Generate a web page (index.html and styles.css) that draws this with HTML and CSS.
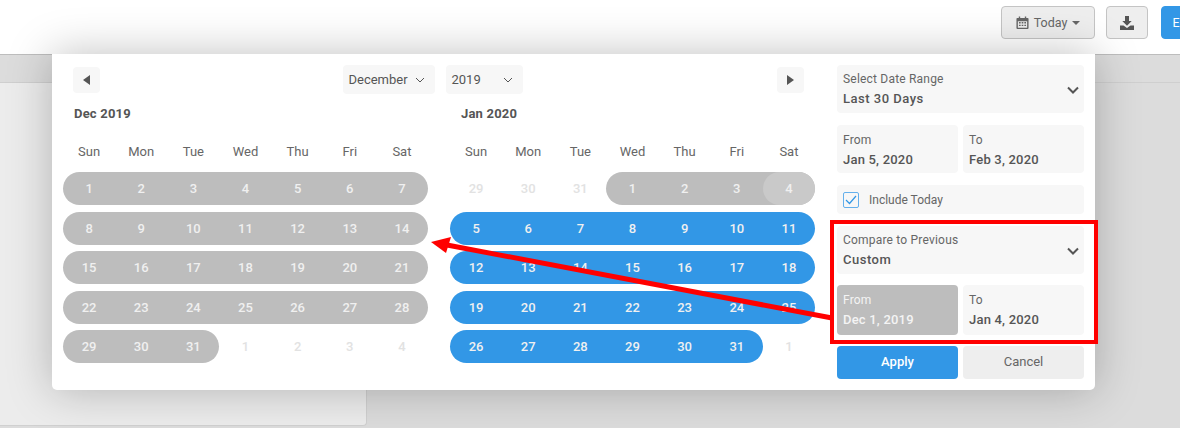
FILE: index.html
```html
<!DOCTYPE html>
<html>
	<head>
		<meta charset="utf-8">
		<title>Date range</title>
		<link rel="stylesheet" href="styles.css">
	</head>
	<body>
		<div class="topbar">
			<button class="tool today">
				<svg width="13" height="14" viewBox="0 0 14 14"><path fill="#666" fill-rule="evenodd" d="M3 0h1.500v1.500h5V0H11v1.500h1.500a1 1 0 0 1 1 1v10a1 1 0 0 1-1 1h-11a1 1 0 0 1-1-1v-10a1 1 0 0 1 1-1H3zM2 5v7h10V5zM3.200 6h1.800v1.500H3.200zm2.900 0h1.800v1.500H6.100zM9 6h1.800v1.500H9zM3.200 8.800h1.800v1.500H3.200zm2.900 0h1.800v1.500H6.100zm2.900 0h1.800v1.500H9z"/></svg>
				Today
				<i class="caret"></i>
			</button>
			<button class="tool save">
				<svg width="14" height="14" viewBox="0 0 14 14"><path fill="#555" d="M5 0h4v5h2.700L7 9.700 2.300 5H5zM0 9.500h3.500L7 12l3.500-2.500H14V14H0z"/></svg>
			</button>
			<button class="tool blue">E</button>
		</div>

		<div class="back">
			<div class="strip"></div>
			<div class="card"></div>
		</div>

		<div class="modal">
			<div class="cals">
				<div class="nav">
					<button class="arrow"><i class="tri left"></i></button>
					<div class="pickers">
						<div class="pick month">December <svg width="10" height="6" viewBox="0 0 10 6"><path d="M1 1l4 4 4-4" fill="none" stroke="#555" stroke-width="1"/></svg></div>
						<div class="pick year">2019 <svg width="10" height="6" viewBox="0 0 10 6"><path d="M1 1l4 4 4-4" fill="none" stroke="#555" stroke-width="1"/></svg></div>
					</div>
					<button class="arrow"><i class="tri right"></i></button>
				</div>
				<div class="months">
					<div class="cal">
						<h4>Dec 2019</h4>
						<div class="week head"><span>Sun</span><span>Mon</span><span>Tue</span><span>Wed</span><span>Thu</span><span>Fri</span><span>Sat</span></div>
						<div class="week"><div class="pill gray"><span>1</span><span>2</span><span>3</span><span>4</span><span>5</span><span>6</span><span>7</span></div></div>
						<div class="week"><div class="pill gray"><span>8</span><span>9</span><span>10</span><span>11</span><span>12</span><span>13</span><span>14</span></div></div>
						<div class="week"><div class="pill gray"><span>15</span><span>16</span><span>17</span><span>18</span><span>19</span><span>20</span><span>21</span></div></div>
						<div class="week"><div class="pill gray"><span>22</span><span>23</span><span>24</span><span>25</span><span>26</span><span>27</span><span>28</span></div></div>
						<div class="week"><div class="pill gray"><span>29</span><span>30</span><span>31</span></div><span class="off">1</span><span class="off">2</span><span class="off">3</span><span class="off">4</span></div>
					</div>
					<div class="cal">
						<h4>Jan 2020</h4>
						<div class="week head"><span>Sun</span><span>Mon</span><span>Tue</span><span>Wed</span><span>Thu</span><span>Fri</span><span>Sat</span></div>
						<div class="week"><span class="off">29</span><span class="off">30</span><span class="off">31</span><div class="pill gray"><span>1</span><span>2</span><span>3</span><span class="now">4</span></div></div>
						<div class="week"><div class="pill blue"><span>5</span><span>6</span><span>7</span><span>8</span><span>9</span><span>10</span><span>11</span></div></div>
						<div class="week"><div class="pill blue"><span>12</span><span>13</span><span>14</span><span>15</span><span>16</span><span>17</span><span>18</span></div></div>
						<div class="week"><div class="pill blue"><span>19</span><span>20</span><span>21</span><span>22</span><span>23</span><span>24</span><span>25</span></div></div>
						<div class="week"><div class="pill blue"><span>26</span><span>27</span><span>28</span><span>29</span><span>30</span><span>31</span></div><span class="off">1</span></div>
					</div>
				</div>
			</div>

			<div class="side">
				<div class="box sel">
					<div><label>Select Date Range</label><b>Last 30 Days</b></div>
					<svg width="12" height="8" viewBox="0 0 12 8"><path d="M1 1.500l5 5 5-5" fill="none" stroke="#555" stroke-width="2"/></svg>
				</div>
				<div class="pair">
					<div class="box"><label>From</label><b>Jan 5, 2020</b></div>
					<div class="box"><label>To</label><b>Feb 3, 2020</b></div>
				</div>
				<div class="box check">
					<i class="tick"><svg width="12" height="10" viewBox="0 0 12 10"><path d="M1 5l3.500 3.500L11 1" fill="none" stroke="#3297e6" stroke-width="1.200"/></svg></i>
					Include Today
				</div>
				<div class="box sel">
					<div><label>Compare to Previous</label><b>Custom</b></div>
					<svg width="12" height="8" viewBox="0 0 12 8"><path d="M1 1.500l5 5 5-5" fill="none" stroke="#555" stroke-width="2"/></svg>
				</div>
				<div class="pair tall">
					<div class="box on"><label>From</label><b>Dec 1, 2019</b></div>
					<div class="box"><label>To</label><b>Jan 4, 2020</b></div>
				</div>
				<div class="pair btns">
					<button class="apply">Apply</button>
					<button class="cancel">Cancel</button>
				</div>
			</div>
		</div>

		<!-- annotation -->
		<div class="mark"></div>
		<svg class="arrow-note" width="1180" height="428" viewBox="0 0 1180 428">
			<path d="M832 318L447 245" stroke="#f00" stroke-width="5" fill="none"/>
			<path d="M431 242L451 237L446 253z" fill="#f00"/>
		</svg>
	</body>
</html>
```

FILE: styles.css
```css
html,body{
	margin: 0;
	height: 100%;
}
body{
	width: 1180px;
	height: 428px;
	position: relative;
	overflow: hidden;
	background: #dcdcdc;
	font-family: Roboto, "Liberation Sans", sans-serif;
	font-size: 12px;
	color: #555;
}
button{
	font-family: inherit;
	cursor: pointer;
}

.topbar{
	height: 54px;
	background: #fff;
	display: flex;
	justify-content: flex-end;
	align-items: flex-start;
	padding-top: 6px;
	box-sizing: border-box;
	position: relative;
	z-index: 2;
}
.tool{
	height: 33px;
	margin-left: 11px;
	border: #c4c4c4 solid 1px;
	border-radius: 4px;
	background: #eee;
	color: #666;
	font-size: 12.500px;
	display: flex;
	align-items: center;
	justify-content: center;
	padding: 0;
}
.today{
	width: 94px;
	gap: 5px;
}
.save{
	width: 42px;
}
.tool.blue{
	width: 30px;
	margin-left: 13px;
	margin-right: -11px;
	background: #3297e6;
	border-color: #3297e6;
	color: #fff;
}
.caret{
	border: transparent solid 4px;
	border-top-color: #666;
	border-bottom: none;
}

.back{
	position: absolute;
	left: 0;
	right: 0;
	top: 54px;
	bottom: 0;
	border-top: #bdbdbd solid 1px;
}
.strip{
	height: 27px;
	background: #dcdcdc;
	border-bottom: #cfcfcf solid 1px;
}
.card{
	width: 366px;
	height: 342px;
	background: #ececec;
	border-right: #d0d0d0 solid 1px;
	border-bottom: #d0d0d0 solid 1px;
	border-radius: 0 0 4px 0;
}

.modal{
	position: absolute;
	left: 52px;
	top: 54px;
	width: 1043px;
	height: 336px;
	background: #fff;
	border-radius: 0 0 5px 5px;
	box-shadow: 0 0 45px rgba(0,0,0,0.25);
	display: flex;
	z-index: 3;
}
.cals{
	width: 763px;
	padding-left: 11px;
	box-sizing: border-box;
}
.nav{
	display: flex;
	justify-content: space-between;
	align-items: center;
	height: 29px;
	margin-top: 11px;
	padding: 0 11px 0 10px;
	width: 752px;
	box-sizing: border-box;
	position: relative;
}
.arrow{
	width: 27px;
	height: 26px;
	border: none;
	border-radius: 4px;
	background: #f7f7f7;
	display: flex;
	align-items: center;
	justify-content: center;
	padding: 0;
}
.tri{
	border: transparent solid 5px;
	border-left: none;
	border-right: #555 solid 7px;
}
.tri.right{
	border-right: none;
	border-left: #555 solid 7px;
}
.pickers{
	display: flex;
	gap: 11px;
	margin-left: -12px;
}
.pick{
	height: 29px;
	background: #f7f7f7;
	border-radius: 4px;
	display: flex;
	align-items: center;
	justify-content: space-between;
	box-sizing: border-box;
	padding: 0 10px 0 6px;
	font-size: 13px;
}
.month{
	width: 92px;
}
.year{
	width: 77px;
}

.months{
	display: flex;
	gap: 22px;
}
.cal{
	width: 365px;
}
.cal h4{
	margin: 11px 0 0 11px;
	height: 18px;
	line-height: 18px;
	font-size: 13px;
	letter-spacing: 0.2px;
	font-weight: bold;
	color: #555;
}
.week{
	display: flex;
	height: 33px;
	margin-bottom: 6.500px;
	font-weight: 500;
	font-size: 13px;
}
.week span{
	width: calc(365px / 7);
	flex: none;
	display: flex;
	align-items: center;
	justify-content: center;
}
.week.head{
	margin-top: 17px;
	font-weight: normal;
	height: 22px;
	margin-bottom: 10px;
	color: #666;
	font-size: 13px;
}
.pill{
	display: flex;
	border-radius: 16.500px;
	color: #f0f0f0;
}
.pill.gray{
	background: #bdbdbd;
}
.pill.blue{
	background: #3297e6;
}
.off{
	color: #e2e2e2;
}
.now{
	background: #c9c9c9;
	border-radius: 16.500px;
}

.side{
	width: 247px;
	margin-left: 22px;
	padding-top: 11px;
	display: flex;
	flex-direction: column;
	gap: 12px;
}
.box{
	background: #f7f7f7;
	border-radius: 4px;
	box-sizing: border-box;
	padding: 6px 6px;
	height: 48px;
}
.box label{
	display: block;
	font-size: 12px;
	letter-spacing: 0.2px;
	line-height: 16px;
	color: #666;
}
.box b{
	display: block;
	margin-top: 2px;
	font-size: 13px;
	line-height: 20px;
	font-weight: 500;
	letter-spacing: 0.5px;
	color: #555;
}
.sel{
	display: flex;
	justify-content: space-between;
	align-items: center;
	padding: 8px 5px 6px 6px;
}
.pair{
	display: flex;
	gap: 5px;
}
.pair .box{
	flex: 1;
	padding-top: 7px;
}
.pair .box b{
	letter-spacing: 0.2px;
}
.check{
	height: 29px;
	display: flex;
	align-items: center;
	gap: 10px;
	padding: 0 6px;
	color: #666;
}
.tick{
	width: 16px;
	height: 16px;
	box-sizing: border-box;
	border: #64b0ec solid 1px;
	border-radius: 2px;
	display: flex;
	align-items: center;
	justify-content: center;
}
.tall{
	margin-top: -1px;
}
.tall .box{
	height: 50px;
}
.box.on{
	background: #bdbdbd;
}
.box.on label,
.box.on b{
	color: #f4f4f4;
}
.btns{
	margin-top: -1px;
}
.btns button{
	flex: 1;
	height: 33px;
	border: none;
	border-radius: 4px;
	font-size: 13px;
	padding: 0 0 2px;
}
.apply{
	background: #3297e6;
	color: #fff;
	font-weight: 500;
}
.cancel{
	background: #eee;
	color: #666;
}

.mark{
	position: absolute;
	left: 830px;
	top: 220px;
	width: 268px;
	height: 124px;
	box-sizing: border-box;
	border: #f00 solid 4px;
	z-index: 4;
}
.arrow-note{
	position: absolute;
	left: 0;
	top: 0;
	z-index: 5;
}
```
